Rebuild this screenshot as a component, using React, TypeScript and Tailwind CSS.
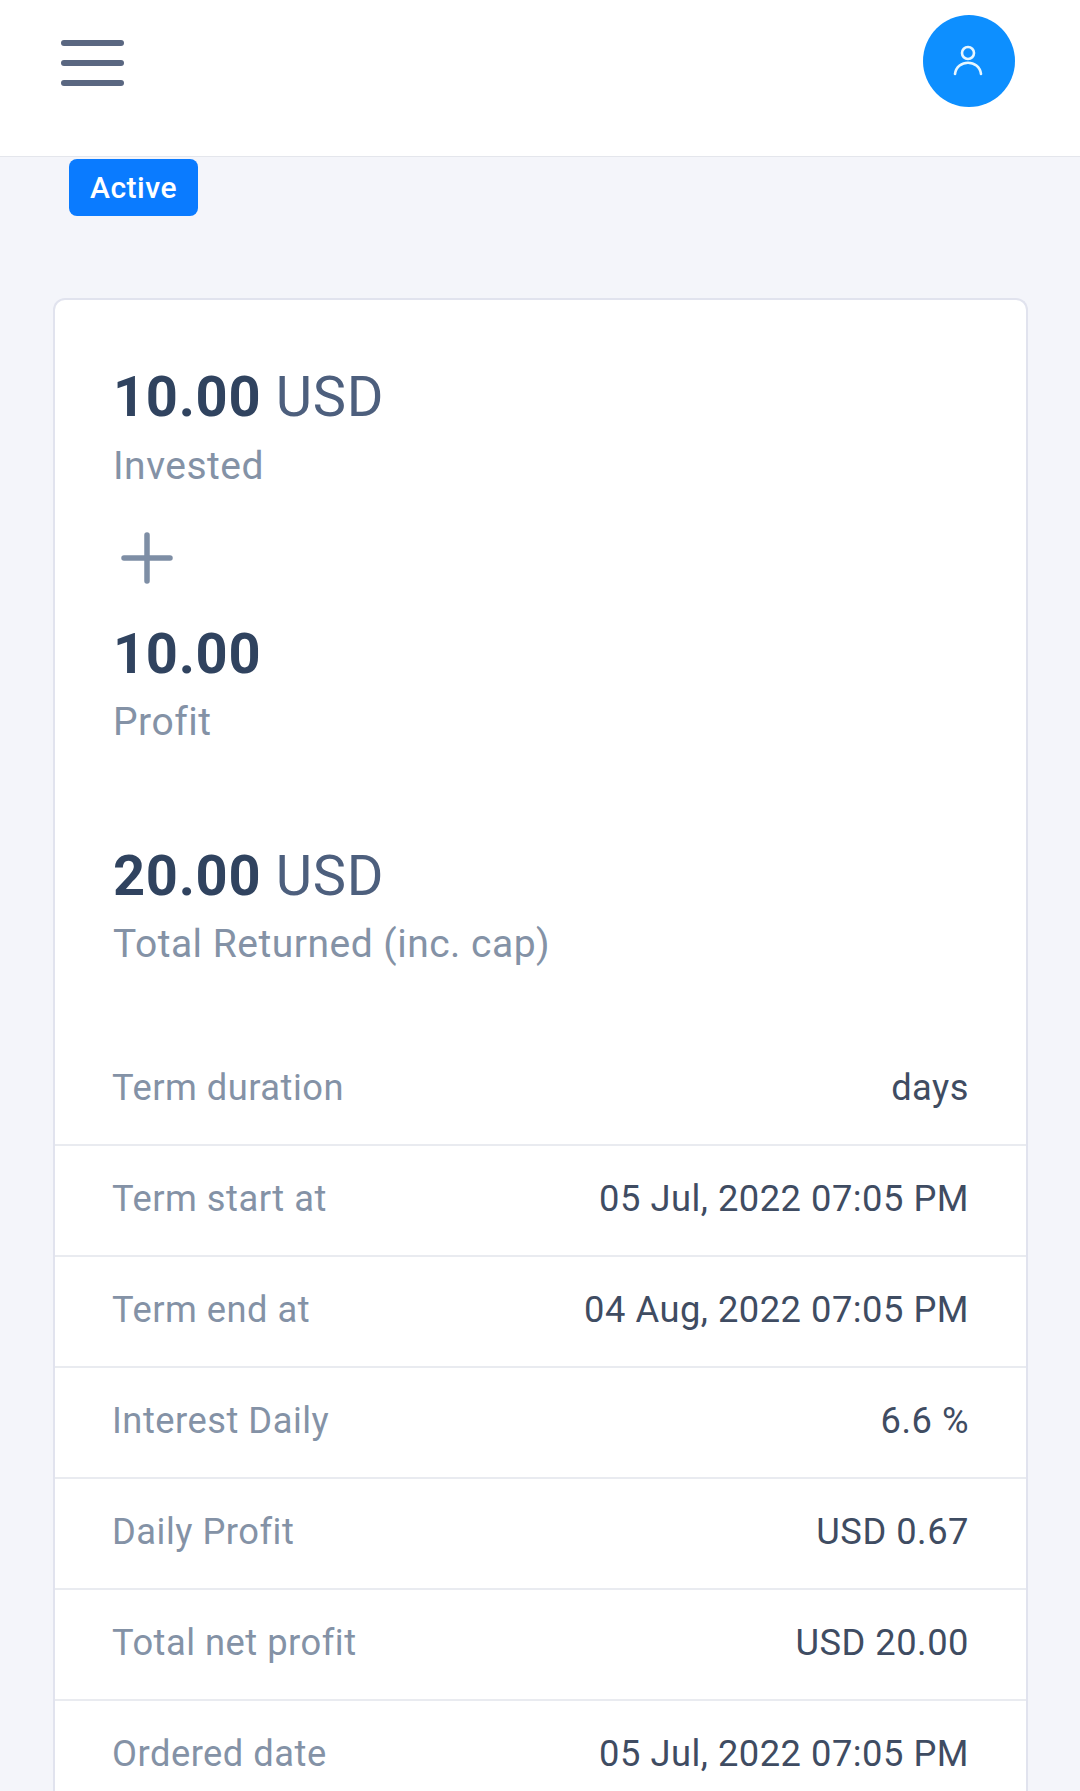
import React from "react";

const rows: [string, string][] = [
  ["Term duration", "days"],
  ["Term start at", "05 Jul, 2022 07:05 PM"],
  ["Term end at", "04 Aug, 2022 07:05 PM"],
  ["Interest Daily", "6.6 %"],
  ["Daily Profit", "USD 0.67"],
  ["Total net profit", "USD 20.00"],
  ["Ordered date", "05 Jul, 2022 07:05 PM"],
];

export default function App() {
  return (
    <div className="h-[1791px] overflow-hidden bg-[#f4f5fa] font-['Roboto',sans-serif] tracking-[0.5px]">
      <header className="flex h-[157px] items-start justify-between border-b border-[#e4e6ec] bg-white pl-[61px] pr-[65px]">
        <button className="mt-[40px] flex flex-col gap-[14px]" aria-label="menu">
          <span className="block h-[6px] w-[63px] rounded-full bg-[#5a6781]" />
          <span className="block h-[6px] w-[63px] rounded-full bg-[#5a6781]" />
          <span className="block h-[6px] w-[63px] rounded-full bg-[#5a6781]" />
        </button>
        <div className="mt-[15px] flex h-[92px] w-[92px] items-center justify-center rounded-full bg-[#0d8fff]">
          <svg width="32" height="32" viewBox="0 0 32 32" fill="none" stroke="#e6f6ff" strokeWidth="2.6" strokeLinecap="round">
            <circle cx="15" cy="8" r="6" />
            <path d="M2 29 C4 14 26 14 28 29" />
          </svg>
        </div>
      </header>

      <div className="pl-[69px] pt-[2px]">
        <span className="inline-flex h-[57px] w-[129px] items-center justify-center rounded-[8px] bg-[#0a7bff] text-[30px] font-medium text-white">
          Active
        </span>
      </div>

      <section className="ml-[53px] mt-[82px] w-[975px] rounded-t-[12px] border-2 border-b-0 border-[#e1e3ee] bg-white">
        <div className="px-[58px] pt-[64px]">
          <div className="text-[56px] leading-[66px] tracking-[0.7px] text-[#4d5f7d]">
            <span className="font-bold text-[#30435f]">10.00</span> USD
          </div>
          <div className="mt-[14px] text-[39px] leading-[44px] text-[#8492a6]">Invested</div>
          <svg className="ml-[8px] mt-[44px]" width="52" height="52" viewBox="0 0 52 52" fill="none" stroke="#7e8ea5" strokeWidth="5.5" strokeLinecap="round">
            <path d="M26 3v46M3 26h46" />
          </svg>
          <div className="mt-[37px] text-[56px] font-bold leading-[66px] tracking-[0.7px] text-[#30435f]">10.00</div>
          <div className="mt-[13px] text-[39px] leading-[44px] text-[#8492a6]">Profit</div>
          <div className="mt-[99px] text-[56px] leading-[66px] tracking-[0.7px] text-[#4d5f7d]">
            <span className="font-bold text-[#30435f]">20.00</span> USD
          </div>
          <div className="mt-[13px] text-[39px] leading-[44px] text-[#8492a6]">Total Returned (inc. cap)</div>
        </div>

        <div className="mt-[69px]">
          {rows.map(([k, v]) => (
            <div key={k} className="flex h-[111px] items-center justify-between border-b-2 border-[#e9ebf0] pb-[2px] pl-[57px] pr-[57px] text-[36.3px]">
              <span className="text-[#8492a6]">{k}</span>
              <span className="text-[#3f4c62]">{v}</span>
            </div>
          ))}
        </div>
      </section>
    </div>
  );
}
